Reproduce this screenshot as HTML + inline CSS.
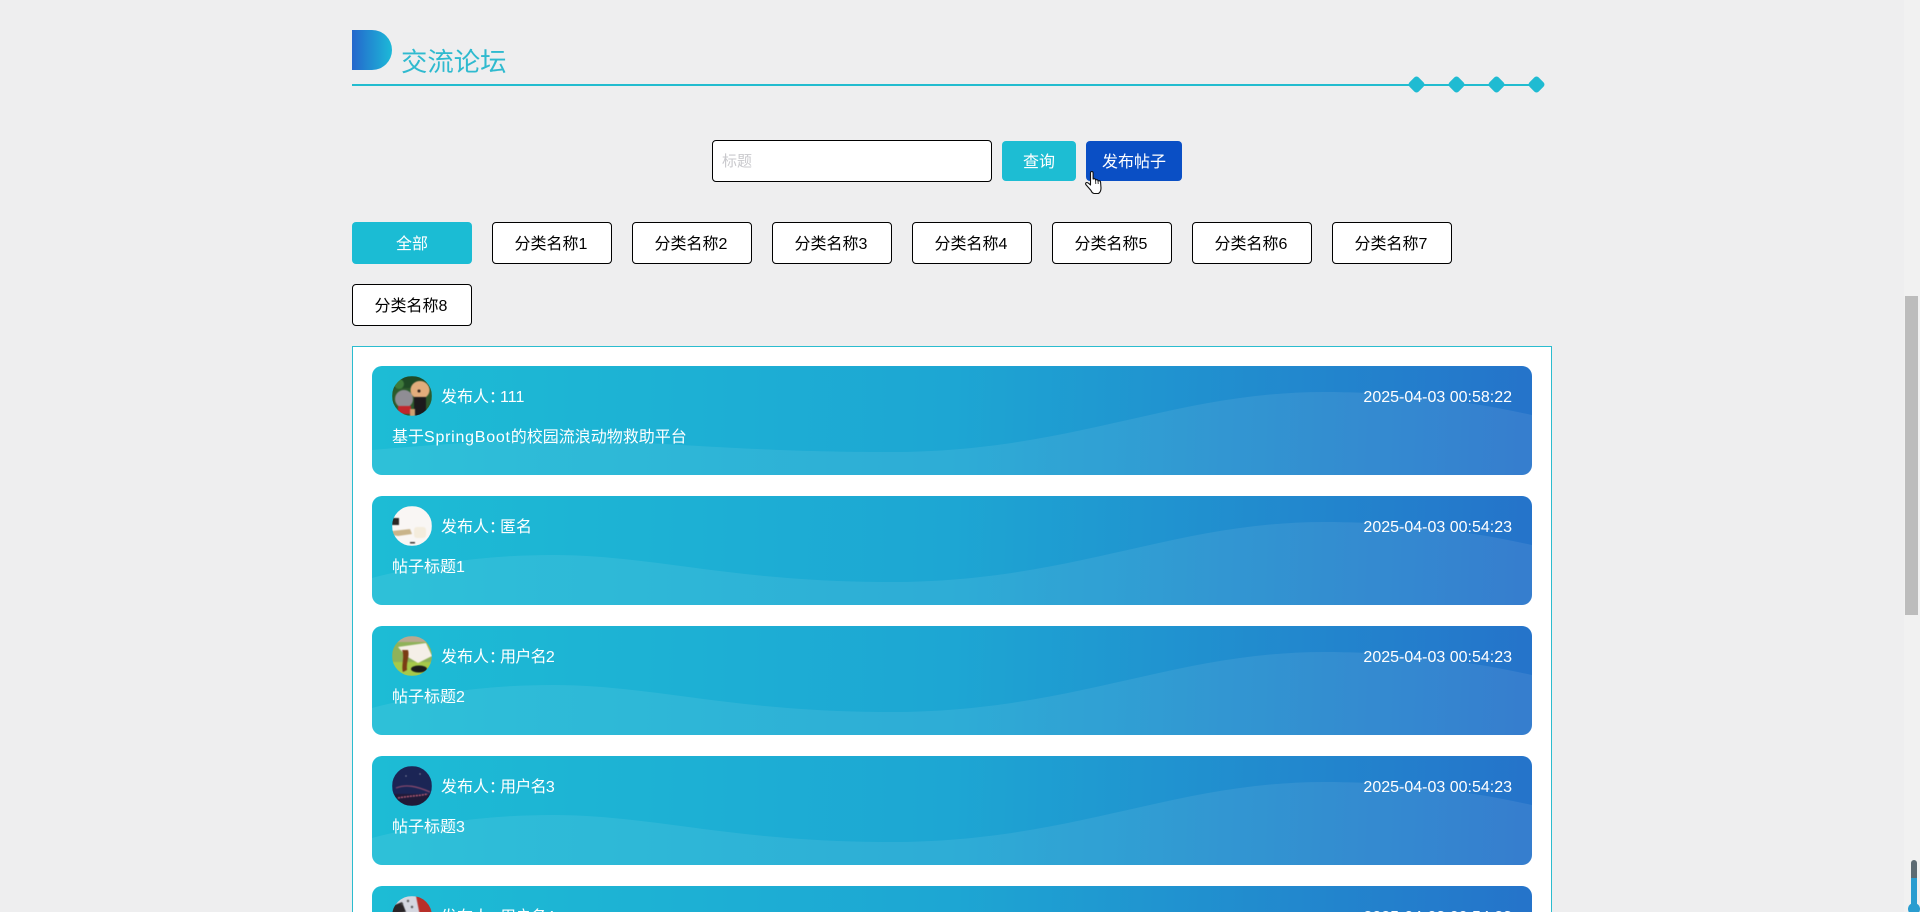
<!DOCTYPE html>
<html lang="zh-CN">
<head>
<meta charset="utf-8">
<title>交流论坛</title>
<style>
html,body{margin:0;padding:0;width:1920px;height:912px;overflow:hidden;background:#eeeeef}
body{position:relative;font-family:"Liberation Sans","Noto Sans CJK SC",sans-serif;font-size:16px;color:#000}
.a{position:absolute;box-sizing:border-box}
.btn{display:flex;align-items:center;justify-content:center;border-radius:4px;text-align:center;padding-bottom:2px}
.tab{width:120px;height:42px;top:222px;background:#fff;border:1px solid #000;font-size:16px;padding-right:2px}
.panel{left:352px;top:346px;width:1200px;height:580px;background:#fff;border:1px solid #2bbccf}
.card{left:372px;width:1160px;height:109.2px;border-radius:10px;overflow:hidden;background:linear-gradient(92deg,#1dbcd5 0%,#1da6d3 50%,#2573ca 100%);color:#fff}
.card svg.w{position:absolute;left:0;top:0}
.av{position:absolute;left:20px;top:10px;width:40px;height:40px;border-radius:50%;overflow:hidden}
.av svg{filter:blur(.6px)}
.n{position:absolute;left:69px;top:22px;line-height:20px;white-space:nowrap}
.n i{font-style:normal;letter-spacing:-5px}
.n b{font-weight:normal;letter-spacing:-.7px}
.d{position:absolute;right:20px;top:22px;line-height:20px;white-space:nowrap}
.t{position:absolute;left:20px;top:62px;line-height:20px;white-space:nowrap}
.dm{width:13px;height:13px;top:78px;background:#1fbbd2;border-radius:3px;transform:rotate(45deg)}
</style>
</head>
<body>

<div class="a" style="left:352px;top:30px;width:40px;height:40px;border-radius:0 20px 20px 0;background:linear-gradient(90deg,#2567cc,#1cb9d8)"></div>
<div class="a" style="left:401px;top:44px;font-size:26.4px;line-height:36px;color:#2fbacf;white-space:nowrap">交流论坛</div>
<div class="a" style="left:352px;top:84px;width:1186px;height:2px;background:#22bccf"></div>
<div class="a dm" style="left:1410px"></div>
<div class="a dm" style="left:1450px"></div>
<div class="a dm" style="left:1490px"></div>
<div class="a dm" style="left:1530px"></div>

<div class="a" style="left:712px;top:140px;width:280px;height:42px;background:#fff;border:1px solid #000;border-radius:4px"></div>
<div class="a" style="left:722px;top:152px;font-size:15px;line-height:20px;color:#c9c9cd">标题</div>
<div class="a btn" style="left:1002px;top:141px;width:74px;height:40px;background:#1dbdd3;color:#fff">查询</div>
<div class="a btn" style="left:1086px;top:141px;width:96px;height:40px;background:#0a4fc5;color:#fff">发布帖子</div>

<div class="a btn" style="left:352px;top:222px;width:120px;height:42px;background:#1bbcd4;color:#fff">全部</div>
<div class="a btn tab" style="left:492px">分类名称1</div>
<div class="a btn tab" style="left:632px">分类名称2</div>
<div class="a btn tab" style="left:772px">分类名称3</div>
<div class="a btn tab" style="left:912px">分类名称4</div>
<div class="a btn tab" style="left:1052px">分类名称5</div>
<div class="a btn tab" style="left:1192px">分类名称6</div>
<div class="a btn tab" style="left:1332px">分类名称7</div>
<div class="a btn tab" style="left:352px;top:284px">分类名称8</div>

<div class="a panel"></div>

<div class="a card" style="top:366px">
<svg class="w" width="1160" height="110" viewBox="0 0 1160 110"><path d="M0 84C60 79 120 74 181 74C280 74 360 86 519 86C700 86 800 26 952 26C1040 26 1110 38 1160 49L1160 110L0 110Z" fill="#fff" fill-opacity=".08"/></svg>
<div class="av"><svg width="40" height="40" viewBox="0 0 40 40"><rect width="40" height="40" fill="#2c5a2c"/><rect width="40" height="12" fill="#1f4a26"/><circle cx="7" cy="8" r="5" fill="#3f7a3a"/><ellipse cx="12" cy="23" rx="9" ry="9" fill="#8f8d94"/><ellipse cx="28" cy="14" rx="9.5" ry="9" fill="#e2ad7c"/><rect x="22" y="21" width="12" height="19" fill="#1c1a1c"/><rect x="6" y="30" width="13" height="8" fill="#c0262c"/><circle cx="27" cy="15" r="1.5" fill="#30201a"/><rect x="18" y="33" width="5" height="7" fill="#cda070"/></svg></div>
<div class="n">发布人<i>：</i>111</div>
<div class="d">2025-04-03 00:58:22</div>
<div class="t">基于<span style="letter-spacing:.75px">SpringBoot</span>的校园流浪动物救助平台</div>
</div>

<div class="a card" style="top:496px">
<svg class="w" width="1160" height="110" viewBox="0 0 1160 110"><path d="M0 82C60 66 120 59 181 59C280 59 360 86 519 86C700 86 800 26 952 26C1040 26 1110 38 1160 49L1160 110L0 110Z" fill="#fff" fill-opacity=".08"/></svg>
<div class="av"><svg width="40" height="40" viewBox="0 0 40 40"><rect width="40" height="40" fill="#f9f6f4"/><rect x="0" y="12" width="7" height="7" fill="#2b2826"/><path d="M0 25L18 23L20 28L6 30L0 29Z" fill="#c9b48a"/><rect x="22" y="21" width="12" height="11" rx="3" fill="#f4ecdc"/><rect x="18" y="36" width="5" height="1.5" fill="#3a3532"/></svg></div>
<div class="n">发布人<i>：</i>匿名</div>
<div class="d">2025-04-03 00:54:23</div>
<div class="t">帖子标题1</div>
</div>

<div class="a card" style="top:626px">
<svg class="w" width="1160" height="110" viewBox="0 0 1160 110"><path d="M0 82C60 66 120 59 181 59C280 59 360 86 519 86C700 86 800 26 952 26C1040 26 1110 38 1160 49L1160 110L0 110Z" fill="#fff" fill-opacity=".08"/></svg>
<div class="av"><svg width="40" height="40" viewBox="0 0 40 40"><rect width="40" height="40" fill="#8fb25a"/><rect width="40" height="6" fill="#b9a98f"/><rect y="26" width="40" height="14" fill="#a6c94a"/><path d="M6 11L34 7L40 20L26 27L14 20Z" fill="#f5efe8"/><path d="M10 14C13 20 9 30 11 36L15 34C14 26 18 20 16 14Z" fill="#7a3c14"/><ellipse cx="27" cy="33" rx="8" ry="3.5" fill="#1c1c1a"/></svg></div>
<div class="n">发布人<i>：</i><b>用户名2</b></div>
<div class="d">2025-04-03 00:54:23</div>
<div class="t">帖子标题2</div>
</div>

<div class="a card" style="top:756px">
<svg class="w" width="1160" height="110" viewBox="0 0 1160 110"><path d="M0 82C60 66 120 59 181 59C280 59 360 86 519 86C700 86 800 26 952 26C1040 26 1110 38 1160 49L1160 110L0 110Z" fill="#fff" fill-opacity=".08"/></svg>
<div class="av"><svg width="40" height="40" viewBox="0 0 40 40"><rect width="40" height="40" fill="#1b2555"/><rect y="28" width="40" height="12" fill="#201a38"/><path d="M4 22C14 18 24 20 38 26" stroke="#8b4a6e" stroke-width="1.2" fill="none"/><path d="M6 32C16 30 26 30 36 28" stroke="#c0607a" stroke-width="1.4" fill="none" stroke-dasharray="2 1"/><circle cx="14" cy="10" r=".6" fill="#aab"/><circle cx="28" cy="8" r=".6" fill="#aab"/></svg></div>
<div class="n">发布人<i>：</i><b>用户名3</b></div>
<div class="d">2025-04-03 00:54:23</div>
<div class="t">帖子标题3</div>
</div>

<div class="a card" style="top:886px">
<div class="av"><svg width="40" height="40" viewBox="0 0 40 40"><rect width="40" height="40" fill="#d5d7e0"/><path d="M24 0L40 0L40 20L28 20Z" fill="#b8302a"/><path d="M0 10L10 6L14 16L0 18Z" fill="#2a2528"/><circle cx="10" cy="8" r="1.2" fill="#444"/><circle cx="16" cy="5" r="1.2" fill="#555"/><circle cx="20" cy="11" r="1.2" fill="#555"/></svg></div>
<div class="n">发布人<i>：</i><b>用户名4</b></div>
<div class="d">2025-04-03 00:54:23</div>
</div>

<div class="a" style="left:1904px;top:0;width:16px;height:912px;background:#f1f1f1"></div>
<div class="a" style="left:1905px;top:296px;width:13px;height:319px;background:#bcbcbc"></div>
<div class="a" style="left:1911px;top:860px;width:6px;height:52px;border-radius:3px 3px 0 0;background:linear-gradient(#5d6b73 0,#5d6b73 35%,#2a9dd0 35%,#2a9dd0 100%)"></div>
<div class="a" style="left:1908px;top:903px;width:12px;height:12px;border-radius:50%;background:#2a9dd0"></div>

<svg class="a" style="left:1085px;top:170px" width="18" height="25" viewBox="0 0 18 25"><path d="M5.5 3Q5.5 1.5 6.8 1.5Q8.1 1.5 8.1 3L8.1 9Q10.3 8 10.6 10Q12.8 9 13 11Q15.4 10 15.6 12.5L16 18Q16 22 13.5 23.5L9 23.5Q7 23 6 20.5L1 14.8Q0 13 1.5 12.5Q3 12.4 5.5 15Z" fill="#fff" stroke="#111" stroke-width="1.1" stroke-linejoin="round"/><path d="M10.6 10L10.8 14M13 11L13.2 14" stroke="#111" stroke-width=".8" fill="none"/></svg>

</body>
</html>
